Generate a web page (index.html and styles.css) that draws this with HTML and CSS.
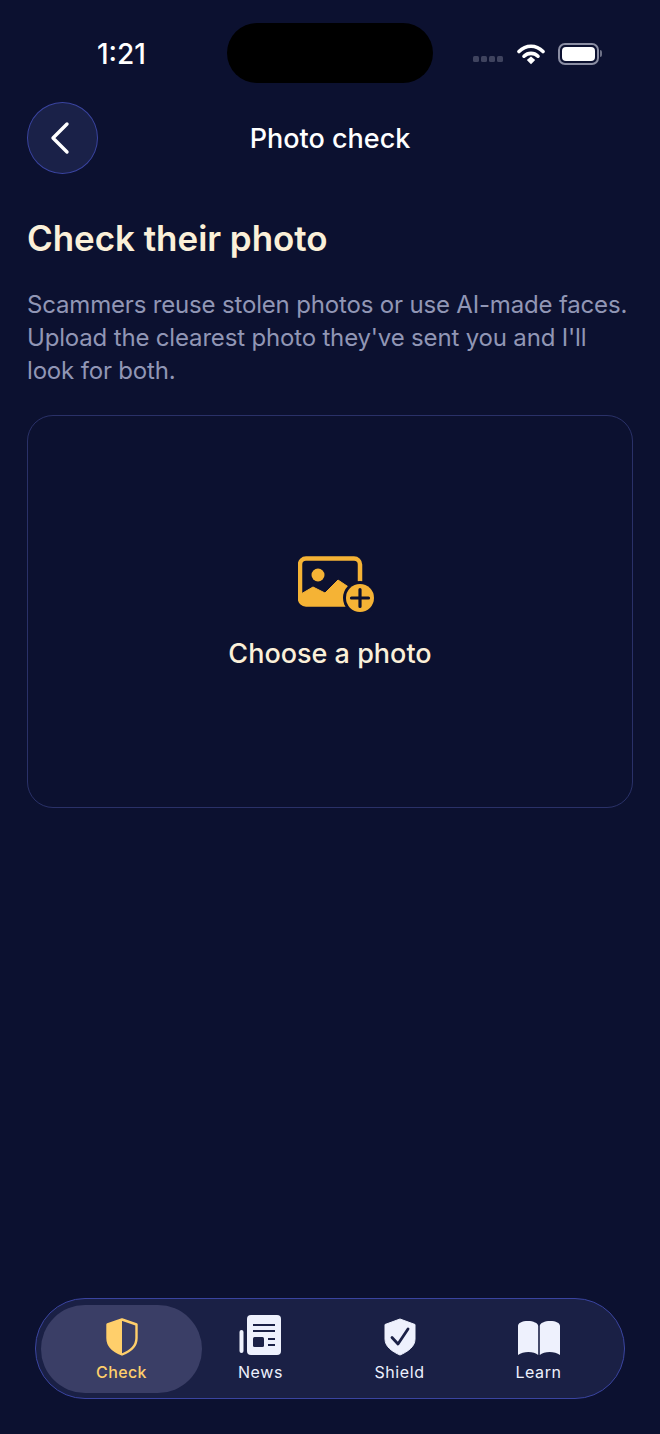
FILE: index.html
```html
<!DOCTYPE html>
<html lang="en">
<head>
    <meta charset="UTF-8">
    <title>Photo check</title>
    <link rel="stylesheet" href="styles.css">
</head>
<body>
    <div class="screen">
        <div class="status-bar">
            <span class="time">1:21</span>
            <div class="island"></div>
            <div class="status-icons">
                <div class="signal"><i></i><i></i><i></i><i></i></div>
                <svg class="wifi" width="28" height="22" viewBox="0 0 28 22">
                    <path d="M2 8.5C9 1.5 19 1.5 26 8.5" fill="none" stroke="#fff" stroke-width="3.6" stroke-linecap="round"/>
                    <path d="M7 13.2C11 9.4 17 9.4 21 13.2" fill="none" stroke="#fff" stroke-width="3.6" stroke-linecap="round"/>
                    <path d="M9.8 17L14 13.6L18.2 17L14 21.2Z" fill="#fff"/>
                </svg>
                <div class="battery"><div class="battery-fill"></div></div>
            </div>
        </div>

        <div class="header">
            <button class="back-btn">
                <svg width="24" height="34" viewBox="0 0 24 34"><path d="M19 3L5 17L19 31" fill="none" stroke="#fff" stroke-width="3.4" stroke-linecap="round" stroke-linejoin="round"/></svg>
            </button>
            <div class="header-title">Photo check</div>
        </div>

        <div class="content">
            <h1>Check their photo</h1>
            <p class="intro">Scammers reuse stolen photos or use AI-made faces. Upload the clearest photo they've sent you and I'll look for both.</p>
            <div class="upload-card">
                <svg class="upload-icon" width="76" height="57" viewBox="0 0 76 57">
                    <rect x="2" y="2.500" width="60" height="46" rx="6" fill="none" stroke="#f5b335" stroke-width="4.500"/>
                    <circle cx="20" cy="19" r="6.500" fill="#f5b335"/>
                    <path d="M3 38L15 31L27 37L40 24L52 32V49H8a5 5 0 0 1-5-5Z" fill="#f5b335" stroke="#f5b335" stroke-linejoin="round"/>
                    <circle cx="62" cy="42" r="17" fill="#0c1130"/>
                    <circle cx="62" cy="42" r="14" fill="#f5b335"/>
                    <path d="M62 33.500V50.500M53.500 42H70.500" stroke="#0c1130" stroke-width="3.200" stroke-linecap="round"/>
                </svg>
                <div class="upload-label">Choose a photo</div>
            </div>
        </div>

        <div class="tab-bar">
            <div class="tab active">
                <svg width="32" height="38" viewBox="0 0 32 38">
                    <path d="M16 1.500L30.500 6.500V20C30.500 28 24 33.500 16 36.500C8 33.500 1.500 28 1.500 20V6.500Z" fill="none" stroke="#ffcf6b" stroke-width="2.400" stroke-linejoin="round"/>
                    <path d="M16 1.500L1.500 6.500V20C1.500 28 8 33.500 16 36.500Z" fill="#ffcf6b"/>
                </svg>
                <span>Check</span>
            </div>
            <div class="tab">
                <svg width="44" height="42" viewBox="0 0 44 42">
                    <rect x="0.500" y="16" width="4" height="23" rx="2" fill="#eef1fd"/>
                    <rect x="8" y="1" width="34" height="40" rx="4" fill="#eef1fd"/>
                    <path d="M14 11H36M14 17H36M29 25H36M29 31H36" stroke="#1b2147" stroke-width="2"/>
                    <rect x="14" y="23" width="11" height="10" rx="1.500" fill="#1b2147"/>
                </svg>
                <span>News</span>
            </div>
            <div class="tab">
                <svg width="32" height="38" viewBox="0 0 32 38">
                    <path d="M16 1L31 6.500V21C31 28.500 24 33.500 16 37C8 33.500 1 28.500 1 21V6.500Z" fill="#eef1fd" stroke="#eef1fd" stroke-linejoin="round"/>
                    <path d="M8 19.500L14 26L24 11" fill="none" stroke="#1b2147" stroke-width="2.800" stroke-linecap="round" stroke-linejoin="round"/>
                </svg>
                <span>Shield</span>
            </div>
            <div class="tab">
                <svg width="44" height="36" viewBox="0 0 44 36">
                    <path d="M1 6C1 3 5 1 11 1C16 1 21.200 3 21.200 6V35C17 31 6 31 1 35Z" fill="#eef1fd"/>
                    <path d="M43 6C43 3 39 1 33 1C28 1 22.800 3 22.800 6V35C27 31 38 31 43 35Z" fill="#eef1fd"/>
                </svg>
                <span>Learn</span>
            </div>
        </div>
    </div>
</body>
</html>
```

FILE: styles.css
```css
* {
    box-sizing: border-box;
}
html, body {
    margin: 0;
    padding: 0;
}
body {
    font-family: Inter, "Liberation Sans", sans-serif;
    background-color: #0c1130;
    color: #fff;
}
.screen {
    width: 660px;
    height: 1434px;
    display: flex;
    flex-direction: column;
    overflow: hidden;
}

/* Status bar */
.status-bar {
    height: 102px;
    padding-top: 23px;
    position: relative;
    display: flex;
    justify-content: center;
}
.time {
    position: absolute;
    left: 97px;
    top: 38px;
    font-size: 28px;
    line-height: 32px;
    font-weight: 500;
}
.island {
    width: 206px;
    height: 60px;
    border-radius: 30px;
    background-color: #000;
}
.status-icons {
    position: absolute;
    left: 473px;
    top: 43px;
    display: flex;
    align-items: center;
}
.signal {
    display: flex;
    gap: 2px;
    margin-top: 9px;
    margin-right: 14px;
}
.signal i {
    width: 6px;
    height: 6px;
    border-radius: 1.5px;
    background-color: #3f435e;
}
.wifi {
    margin-right: 13px;
}
.battery {
    width: 41px;
    height: 22px;
    border: 2px solid #8b8ea3;
    border-radius: 7px;
    padding: 2px;
    position: relative;
}
.battery::after {
    content: "";
    position: absolute;
    right: -5px;
    top: 5px;
    width: 2px;
    height: 7px;
    border-radius: 0 2px 2px 0;
    background-color: #6d7086;
}
.battery-fill {
    height: 100%;
    border-radius: 4px;
    background-color: #fff;
}

/* Header */
.header {
    height: 72px;
    padding: 0 27px;
    position: relative;
    display: flex;
    align-items: center;
}
.back-btn {
    width: 71px;
    height: 72px;
    padding: 0 6px 0 0;
    border-radius: 50%;
    border: 1.5px solid #3a44a0;
    background-color: #1a2148;
    display: flex;
    align-items: center;
    justify-content: center;
}
.header-title {
    position: absolute;
    left: 0;
    right: 0;
    text-align: center;
    font-size: 27px;
    font-weight: 500;
}

/* Content */
.content {
    padding: 42px 27px 0;
}
h1 {
    margin: 0;
    font-size: 35px;
    line-height: 44px;
    font-weight: 600;
    letter-spacing: -0.05px;
    color: #fbf0d9;
}
.intro {
    margin: 28px 0 0;
    font-size: 24px;
    line-height: 33px;
    letter-spacing: -0.17px;
    color: #9196b5;
}
.upload-card {
    margin-top: 28px;
    height: 393px;
    padding-top: 3px;
    border: 1.5px solid #2a3168;
    border-radius: 26px;
    display: flex;
    flex-direction: column;
    align-items: center;
    justify-content: center;
    gap: 24px;
}
.upload-icon {
    margin-left: 12px;
}
.upload-label {
    font-size: 27px;
    font-weight: 500;
    color: #fbf0d9;
}

/* Tab bar */
.tab-bar {
    margin: auto 35px 35px;
    height: 101px;
    padding: 5px;
    border-radius: 50px;
    border: 1.5px solid #3a44a0;
    background-color: #1a2045;
    display: flex;
    align-items: center;
}
.tab {
    height: 88px;
    flex: 0 0 139px;
    border-radius: 44px;
    display: flex;
    flex-direction: column;
    align-items: center;
    justify-content: flex-end;
    gap: 6px;
    padding-bottom: 11px;
    font-size: 16px;
    letter-spacing: 0.6px;
    font-weight: 400;
    color: #eef1fd;
}
.tab.active {
    flex: 0 0 161px;
    margin-right: -11px;
    background-color: #3a3e66;
    color: #ffcf6b;
    font-weight: 500;
    letter-spacing: 0.4px;
}
```
